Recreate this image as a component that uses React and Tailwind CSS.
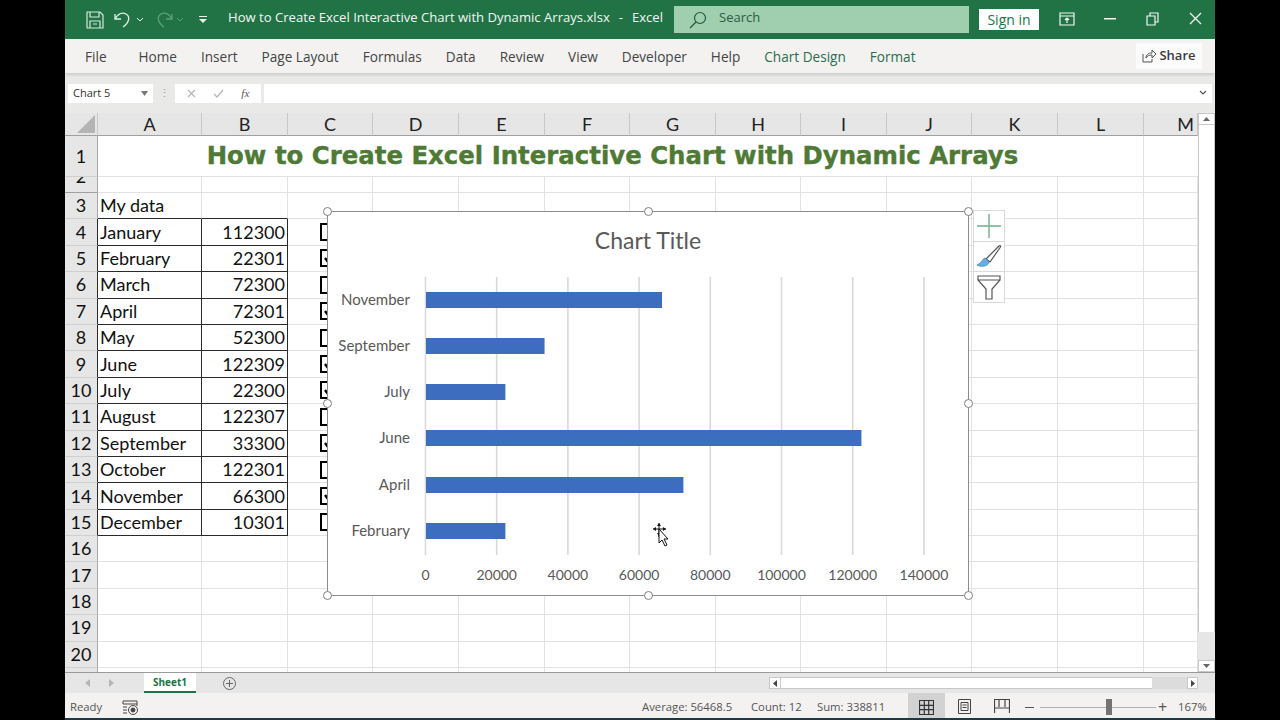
import React from "react";

const columns = ["A", "B", "C", "D", "E", "F", "G", "H", "I", "J", "K", "L", "M"];

const tableRows = [
  { name: "January", value: 112300, on: false },
  { name: "February", value: 22301, on: true },
  { name: "March", value: 72300, on: false },
  { name: "April", value: 72301, on: true },
  { name: "May", value: 52300, on: false },
  { name: "June", value: 122309, on: true },
  { name: "July", value: 22300, on: true },
  { name: "August", value: 122307, on: false },
  { name: "September", value: 33300, on: true },
  { name: "October", value: 122301, on: false },
  { name: "November", value: 66300, on: true },
  { name: "December", value: 10301, on: false },
];

const bars = [
  { label: "November", value: 66300, y: 88 },
  { label: "September", value: 33300, y: 134 },
  { label: "July", value: 22300, y: 180 },
  { label: "June", value: 122309, y: 226 },
  { label: "April", value: 72301, y: 273 },
  { label: "February", value: 22301, y: 319 },
];

const ticks = [0, 20000, 40000, 60000, 80000, 100000, 120000, 140000];
const ribbonTabs = ["Home", "Insert", "Page Layout", "Formulas", "Data", "Review", "View", "Developer", "Help"];

function Handle({ className }) {
  return <div className={`absolute w-[9px] h-[9px] rounded-full bg-white border border-[#808080] ${className}`}></div>;
}

function Checkbox({ on }) {
  return (
    <div className="w-[18px] h-[18px] border-[2.5px] border-black bg-white shrink-0 flex items-center justify-center">
      {on && (
        <svg width="11" height="11" viewBox="0 0 11 11" fill="none" stroke="black" strokeWidth="2.4">
          <path d="M1 5l3 4 6-8" />
        </svg>
      )}
    </div>
  );
}

function Chart() {
  return (
    <div className="absolute left-[262px] top-[98px] w-[642px] h-[385px] bg-white border border-[#8c8c8c]">
      <svg width="640" height="383" viewBox="0 0 640 383" style={{ fontFamily: "Lato, sans-serif" }}>
        <text x="320" y="37" textAnchor="middle" fontSize="23" fill="#595959">Chart Title</text>
        {ticks.map((t, i) => (
          <g key={t}>
            <line x1={97.5 + i * 71.2} x2={97.5 + i * 71.2} y1="65" y2="343" stroke="#d9d9d9" strokeWidth="1.600" />
            <text x={97.5 + i * 71.2} y="368" textAnchor="middle" fontSize="14" fill="#595959">{t}</text>
          </g>
        ))}
        {bars.map((b) => (
          <g key={b.label}>
            <rect x="98" y={b.y - 8} width={(b.value * 71.2) / 20000} height="16" fill="#3d6dbf" />
            <text x="82" y={b.y + 5} textAnchor="end" fontSize="15" fill="#595959">{b.label}</text>
          </g>
        ))}
        {/* move cursor */}
        <g transform="translate(325 311)">
          <path d="M6 0v14M0 6h13" stroke="#111" strokeWidth="1" />
          <path d="M6 0l-2 3h4zM6 13l-2-3h4zM0 6l3-2v4zM13 6l-3-2v4z" fill="#111" />
          <path d="M6 6v14l3-3 3 6 2-1-3-6h4z" fill="#fff" stroke="#111" strokeWidth="1" />
        </g>
      </svg>
      <Handle className="-left-[5px] -top-[5px]" />
      <Handle className="left-[316px] -top-[5px]" />
      <Handle className="-right-[5px] -top-[5px]" />
      <Handle className="-left-[5px] top-[187px]" />
      <Handle className="-right-[5px] top-[187px]" />
      <Handle className="-left-[5px] -bottom-[5px]" />
      <Handle className="left-[316px] -bottom-[5px]" />
      <Handle className="-right-[5px] -bottom-[5px]" />
    </div>
  );
}

function ChartButtons() {
  return (
    <div className="absolute left-[908px] top-[97px] w-[32px] flex flex-col bg-white border border-[#d9d9d9]">
      <div className="h-[31px] flex items-center justify-center border-b border-[#d9d9d9]">
        <svg width="26" height="26" viewBox="0 0 26 26" stroke="#6fae8d" strokeWidth="1.400">
          <path d="M13 1v24M1 13h24" />
        </svg>
      </div>
      <div className="h-[30px] flex items-center justify-center border-b border-[#d9d9d9]">
        <svg width="28" height="28" viewBox="0 0 28 28" fill="none">
          <path d="M11 16L24 3c1-1 2 0 1.500 1L15 19z" fill="#fff" stroke="#555" strokeWidth="1.200" />
          <path d="M10 15c-3 1-3 5-8 7 3 2 11 2 12-3z" fill="#6aaee0" stroke="#3f86bd" strokeWidth="0.800" />
        </svg>
      </div>
      <div className="h-[30px] flex items-center justify-center">
        <svg width="26" height="26" viewBox="0 0 26 26" fill="none" stroke="#555" strokeWidth="1.200">
          <path d="M2 2h22v4l-8 9v10h-6V15L2 6zM2 6h22" />
        </svg>
      </div>
    </div>
  );
}

function Sheet() {
  return (
    <div className="relative flex-1 min-w-0 overflow-hidden bg-white">
      <div
        className="grid grid-cols-[33px_104px_86px_85px_86px_86px_85px_86px_85px_86px_85px_86px_86px_54px] grid-rows-[23px_41px_16px_repeat(18,26.4px)_6px] text-[18px] text-[#111] font-['Lato',sans-serif]"
      >
        {/* header row */}
        <div className="bg-[#e6e6e6] border-r border-b border-r-[#c8c8c8] border-b-[#a0a0a0] flex items-center justify-end pr-[2px]">
          <svg width="18" height="18" viewBox="0 0 18 18"><path d="M18 0v18H0z" fill="#b4b4b4" /></svg>
        </div>
        {columns.map((c) => (
          <div key={c} className="bg-[#e6e6e6] border-r border-b border-r-[#c8c8c8] border-b-[#a0a0a0] flex items-center justify-center text-[18px] text-[#222]">
            {c === "M" ? <span className="pl-[30px]">M</span> : c}
          </div>
        ))}

        {/* row 1, merged title */}
        <div className="bg-[#e6e6e6] border-r border-b border-r-[#a6a6a6] border-b-[#cfcfcf] flex items-center justify-center">1</div>
        <div className="col-span-12 border-r border-b border-[#e2e2e2] flex items-center justify-center pr-[16px] font-['DejaVu_Sans',sans-serif] font-bold text-[24.400px] text-[#4f7a35] whitespace-nowrap [-webkit-text-stroke:0.4px_#4f7a35]">
          How to Create Excel Interactive Chart with Dynamic Arrays
        </div>
        <div className="border-b border-[#e2e2e2]"></div>

        {/* row 2 is squeezed, only the foot of its number shows */}
        <div className="bg-[#e6e6e6] border-r border-b border-r-[#a6a6a6] border-b-[#a0a0a0] flex justify-center overflow-hidden leading-[14px]">
          <span className="-mt-[8px]">2</span>
        </div>
        {columns.map((c) => (
          <div key={c} className="border-r border-b border-[#e2e2e2]"></div>
        ))}

        {/* row 3 */}
        <div className="bg-[#e6e6e6] border-r border-b border-r-[#a6a6a6] border-b-[#cfcfcf] flex items-center justify-center">3</div>
        <div className="border-r border-b border-r-[#e2e2e2] border-b-[#2a2a2a] flex items-center pl-[2px]">My data</div>
        <div className="border-r border-b border-r-[#e2e2e2] border-b-[#2a2a2a]"></div>
        {columns.slice(2).map((c) => (
          <div key={c} className="border-r border-b border-[#e2e2e2]"></div>
        ))}

        {/* table rows 4 to 15 */}
        {tableRows.map((row, i) => (
          <React.Fragment key={row.name}>
            <div className="bg-[#e6e6e6] border-r border-b border-r-[#2a2a2a] border-b-[#cfcfcf] flex items-center justify-center">{i + 4}</div>
            <div className="border-r border-b border-[#2a2a2a] flex items-center pl-[2px]">{row.name}</div>
            <div className="border-r border-b border-[#2a2a2a] flex items-center justify-end pr-[2px]">{row.value}</div>
            <div className="border-r border-b border-[#e2e2e2] flex items-center pl-[32px]">
              <Checkbox on={row.on} />
            </div>
            {columns.slice(3).map((c) => (
              <div key={c} className="border-r border-b border-[#e2e2e2]"></div>
            ))}
          </React.Fragment>
        ))}

        {/* rows 16 to 20 */}
        {[16, 17, 18, 19, 20].map((n) => (
          <React.Fragment key={n}>
            <div className="bg-[#e6e6e6] border-r border-b border-r-[#a6a6a6] border-b-[#cfcfcf] flex items-center justify-center">{n}</div>
            {columns.map((c) => (
              <div key={c} className="border-r border-b border-[#e2e2e2]"></div>
            ))}
          </React.Fragment>
        ))}

        {/* top of row 21 */}
        <div className="bg-[#e6e6e6] border-r border-[#a6a6a6]"></div>
        {columns.map((c) => (
          <div key={c} className="border-r border-[#e2e2e2]"></div>
        ))}
      </div>
      <Chart />
      <ChartButtons />
    </div>
  );
}

export default function App() {
  return (
    <div className="w-[1280px] h-[720px] bg-black overflow-hidden pl-[65px] pr-[65px] font-['Open_Sans',sans-serif]">
      <div className="h-full flex flex-col bg-[#f3f2f1]">
        {/* title bar */}
        <div className="h-[39px] shrink-0 bg-[#217346] flex items-center text-[#f2f7f4] text-[13.100px]">
          <svg className="ml-[21px]" width="18" height="18" viewBox="0 0 18 18" fill="none" stroke="#d5e8dc" strokeWidth="1.200">
            <path d="M1 1h13l3 3v13H1zM4 1v5h9V1M4 17v-7h10v7M7 13h4" />
          </svg>
          <svg className="ml-[10px]" width="18" height="18" viewBox="0 0 18 18" fill="none" stroke="#e3efe8" strokeWidth="1.300">
            <path d="M1 3v5h6M1 8c3-5 7-7 11-5s4 8-3 13" />
          </svg>
          <svg className="ml-[4px]" width="8" height="8" viewBox="0 0 8 8" fill="none" stroke="#e3efe8"><path d="M1 2l3 3 3-3" /></svg>
          <svg className="ml-[11px]" width="18" height="18" viewBox="0 0 18 18" fill="none" stroke="#5f9f7c" strokeWidth="1.300">
            <path d="M17 3v5h-6M17 8C14 3 10 1 6 3s-4 8 3 13" />
          </svg>
          <svg className="ml-[3px]" width="8" height="8" viewBox="0 0 8 8" fill="none" stroke="#5f9f7c"><path d="M1 2l3 3 3-3" /></svg>
          <svg className="ml-[14px]" width="10" height="10" viewBox="0 0 10 10" fill="#e9f3ed">
            <path d="M1 1h8v1H1zM1 4h8L5 8z" />
          </svg>
          <span className="ml-[20px] mb-[3px] whitespace-nowrap">How to Create Excel Interactive Chart with Dynamic Arrays.xlsx</span>
          <span className="ml-[9px] mr-[9px] mb-[3px]">-</span>
          <span className="mb-[3px]">Excel</span>
          <div className="absolute left-[674px] top-[6px] w-[295px] h-[27px] bg-[#a0cfb0] flex items-center text-[#2b5c41] text-[13px]">
            <svg className="ml-[15px]" width="18" height="18" viewBox="0 0 18 18" fill="none" stroke="#215a3c" strokeWidth="1.200">
              <circle cx="11" cy="7" r="5.500" />
              <path d="M7 11l-6 6" />
            </svg>
            <span className="ml-[12px] mb-[3px]">Search</span>
          </div>
          <div className="absolute left-[979px] top-[9px] w-[60px] h-[21px] bg-white flex items-center justify-center text-[#217346] text-[14px]">Sign in</div>
          <svg className="absolute left-[1059px] top-[12px]" width="16" height="14" viewBox="0 0 16 14" fill="none" stroke="#f2f7f4" strokeWidth="1.200">
            <path d="M1 1h14v12H1zM1 4h14M8 11V6M6 8l2-2 2 2" />
          </svg>
          <svg className="absolute left-[1104px] top-[18px]" width="12" height="2" viewBox="0 0 12 2" fill="#f2f7f4"><rect width="12" height="1.500" /></svg>
          <svg className="absolute left-[1146px] top-[12px]" width="13" height="14" viewBox="0 0 13 14" fill="none" stroke="#f2f7f4" strokeWidth="1.200">
            <path d="M1 4h8v9H1zM4 4V1h8v9H9" />
          </svg>
          <svg className="absolute left-[1189px] top-[12px]" width="13" height="13" viewBox="0 0 13 13" stroke="#f2f7f4" strokeWidth="1.300">
            <path d="M1 1l11 11M12 1L1 12" />
          </svg>
        </div>

        {/* ribbon tabs */}
        <div className="h-[34px] shrink-0 bg-[#f3f2f1] flex items-center pt-[2px] text-[13.600px] text-[#444] shadow-[0_2px_3px_rgba(0,0,0,0.12)] relative">
          <span className="ml-[20px] mr-[32px]">File</span>
          <div className="flex items-center gap-[24px]">
            {ribbonTabs.map((t) => (
              <span key={t} className="whitespace-nowrap">{t}</span>
            ))}
            <span className="text-[#2a6e4c] whitespace-nowrap">Chart Design</span>
            <span className="text-[#2a6e4c] whitespace-nowrap">Format</span>
          </div>
          <div className="absolute left-[1071px] top-[4px] w-[66px] h-[26px] bg-[#fbfbfb] flex items-center justify-center gap-[3px] text-[13px] font-semibold text-[#3c3c3c]">
            <svg width="14" height="14" viewBox="0 0 14 14" fill="none" stroke="#555" strokeWidth="1">
              <path d="M1 5v8h9v-3M4 9c0-3 2-5 6-5V1l4 4-4 4V6c-3 0-5 1-6 3z" />
            </svg>
            Share
          </div>
        </div>

        {/* formula bar */}
        <div className="h-[40px] shrink-0 bg-[#e9e9e8] flex items-center">
          <div className="ml-[3px] w-[85px] h-[19px] bg-white flex items-center justify-between px-[5px] text-[11px] text-[#333]">
            Chart 5
            <svg width="7" height="5" viewBox="0 0 7 5" fill="#777"><path d="M0 0h7L3.500 5z" /></svg>
          </div>
          <div className="w-[22px] flex justify-center text-[#999] text-[11px]">⋮</div>
          <div className="w-[86px] h-[19px] bg-white flex items-center justify-around px-[3px]">
            <svg width="9" height="9" viewBox="0 0 9 9" stroke="#b5b5b5" strokeWidth="1.200"><path d="M1 1l7 7M8 1L1 8" /></svg>
            <svg width="11" height="9" viewBox="0 0 11 9" fill="none" stroke="#b5b5b5" strokeWidth="1.200"><path d="M1 5l3 3 6-7" /></svg>
            <span className="font-['Liberation_Serif',serif] italic text-[11px] text-[#555]">fx</span>
          </div>
          <div className="ml-[3px] flex-1 h-[19px] bg-white flex items-center justify-end pr-[5px] mr-[3px]">
            <svg width="8" height="6" viewBox="0 0 8 6" fill="none" stroke="#555" strokeWidth="1.200"><path d="M1 1l3 3 3-3" /></svg>
          </div>
        </div>

        {/* sheet and vertical scrollbar */}
        <div className="flex-1 min-h-0 flex">
          <Sheet />
          <div className="w-[17px] shrink-0 flex flex-col bg-[#e6e6e6]">
            <div className="h-[12px] bg-white border border-[#c8c8c8] flex items-center justify-center">
              <svg width="7" height="4" viewBox="0 0 7 4" fill="#666"><path d="M0 4h7L3.500 0z" /></svg>
            </div>
            <div className="h-[507px] bg-white border-x border-[#c8c8c8]"></div>
            <div className="flex-1"></div>
            <div className="h-[12px] bg-white border border-[#c8c8c8] flex items-center justify-center">
              <svg width="7" height="4" viewBox="0 0 7 4" fill="#666"><path d="M0 0h7L3.500 4z" /></svg>
            </div>
          </div>
        </div>

        {/* sheet tabs */}
        <div className="h-[21px] shrink-0 bg-[#e6e6e6] border-t border-[#9a9a9a] flex items-center relative">
          <svg className="ml-[20px]" width="5" height="8" viewBox="0 0 5 8" fill="#b5b5b5"><path d="M5 0v8L0 4z" /></svg>
          <svg className="ml-[19px]" width="5" height="8" viewBox="0 0 5 8" fill="#b5b5b5"><path d="M0 0v8l5-4z" /></svg>
          <div className="ml-[30px] w-[52px] h-[20px] -mt-px bg-white border-b-2 border-[#217346] flex items-center justify-center pt-[2px] text-[10px] font-bold text-[#217346]">Sheet1</div>
          <svg className="ml-[27px]" width="13" height="13" viewBox="0 0 13 13" fill="none" stroke="#666" strokeWidth="1">
            <circle cx="6.500" cy="6.500" r="6" />
            <path d="M6.500 3v7M3 6.500h7" />
          </svg>
          <div className="absolute left-[704px] top-[4px] w-[429px] h-[12px] bg-[#dcdcdc] flex items-stretch">
            <div className="w-[12px] bg-white border border-[#c8c8c8] flex items-center justify-center">
              <svg width="4" height="7" viewBox="0 0 4 7" fill="#444"><path d="M4 0v7L0 3.500z" /></svg>
            </div>
            <div className="w-[371px] bg-white border-y border-[#c8c8c8]"></div>
            <div className="flex-1"></div>
            <div className="w-[11px] bg-white border border-[#c8c8c8] flex items-center justify-center">
              <svg width="4" height="7" viewBox="0 0 4 7" fill="#444"><path d="M0 0v7l4-3.500z" /></svg>
            </div>
          </div>
        </div>

        {/* status bar */}
        <div className="h-[25px] shrink-0 bg-[#f3f2f1] flex items-center pt-[3px] text-[11.300px] text-[#555] relative">
          <span className="ml-[5px]">Ready</span>
          <svg className="ml-[20px]" width="17" height="15" viewBox="0 0 17 15" fill="none" stroke="#444" strokeWidth="1">
            <path d="M1 4V1h14v5M1 4h14M1 7h4M1 10h4M1 13h4" />
            <circle cx="11" cy="10" r="4.500" />
            <circle cx="11" cy="10" r="2" fill="#444" />
          </svg>
          <span className="absolute left-[577px]">Average: 56468.5</span>
          <span className="absolute left-[686px]">Count: 12</span>
          <span className="absolute left-[752px]">Sum: 338811</span>
          <div className="absolute left-[843px] top-0 w-[37px] h-[25px] bg-[#d2d2d2] flex items-center justify-center pt-[3px]">
            <svg width="15" height="15" viewBox="0 0 15 15" fill="none" stroke="#333" strokeWidth="1.200">
              <path d="M.5.500h14v14H.500zM5.300.500v14M9.700.500v14M.5 5.300h14M.5 9.700h14" />
            </svg>
          </div>
          <svg className="absolute left-[892px] top-[6px]" width="15" height="15" viewBox="0 0 15 15" fill="none" stroke="#444">
            <path d="M1.500.500h12v14h-12zM4 3.500h7v8H4zM5.500 6h4M5.500 8.500h4" />
          </svg>
          <svg className="absolute left-[929px] top-[6px]" width="16" height="15" viewBox="0 0 16 15" fill="none" stroke="#444" strokeWidth="1.200">
            <path d="M.5 14V.5h15V14M.5 9h15M5 1v7M11 1v7" />
          </svg>
          <div className="absolute left-[960px] top-[14px] w-[9px] h-px bg-[#555]"></div>
          <div className="absolute left-[975px] top-[14px] w-[116px] h-px bg-[#b0b0b0]"></div>
          <div className="absolute left-[1041px] top-[6px] w-[6px] h-[16px] bg-[#737373]"></div>
          <span className="absolute left-[1093px] text-[16px] leading-none">+</span>
          <span className="absolute left-[1113px]">167%</span>
        </div>

        <div className="h-[2px] shrink-0 bg-[#1d3a44]"></div>
      </div>
    </div>
  );
}
